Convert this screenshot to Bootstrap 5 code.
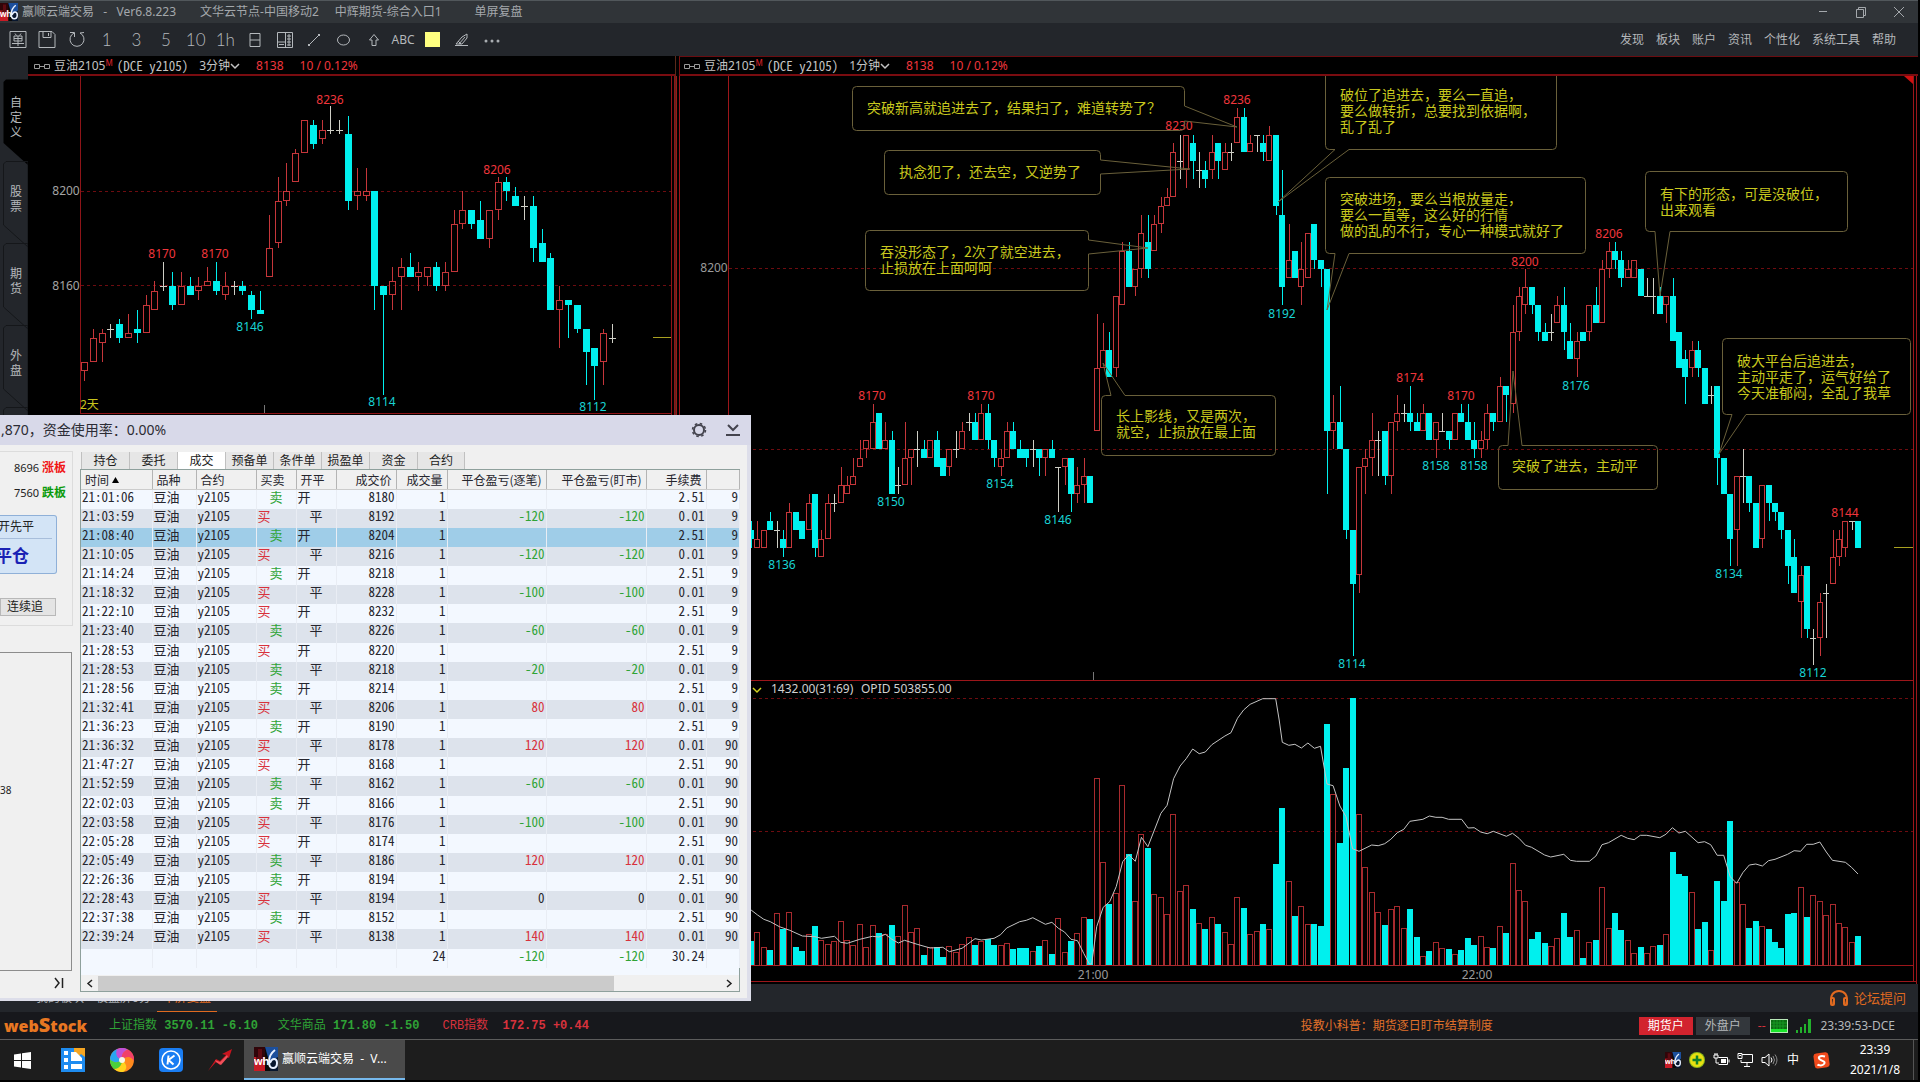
<!DOCTYPE html>
<html lang="zh-CN">
<head>
<meta charset="utf-8">
<meta name="viewport" content="width=device-width, initial-scale=1">
<title>赢顺云端交易</title>
<link href="https://cdn.jsdelivr.net/npm/bootstrap@5.3.0/dist/css/bootstrap.min.css" rel="stylesheet">
<style>
:root{--ui:"Noto Sans","Noto Sans CJK SC",sans-serif;--mono:"Noto Sans Mono CJK SC","Liberation Mono","Noto Sans CJK SC",monospace}
html,body{height:100%}
body{background:#000;font-family:var(--ui);font-size:12px;line-height:16px;color:#b4b7ba;padding:0 2px 2px 0;overflow:hidden}
button{font:inherit;color:inherit;background:none;border:0;padding:0}
svg{display:block}
.ico{fill:none;stroke:currentColor;stroke-width:1}
.titlebar{height:23px;background:#303438;border-top:1px solid #51575b;color:#a4a8ac;padding:0 12px 0 0}
.toolbar-row{height:33px;background:#23262b;padding:0 22px 0 3px}
.tools{width:504px;color:#b4b8bc}
.tools button{flex:1;display:flex;align-items:center;justify-content:center;height:20px;font-size:17px;font-weight:300;font-family:Lato,sans-serif}
.tools .abc{font:12px "Noto Sans",sans-serif}
.swatch{width:15px;height:15px;background:#ffff80}
.topmenu{gap:12px;padding-top:1px}
.topmenu a,.bottomtabs a{color:inherit;text-decoration:none}
.side{width:28px;background:#23262b;padding-top:23px;color:#b5b8bb}
.side button{height:82px;width:28px;position:relative;padding:0 0 6px 5px;line-height:15px}
.side svg{position:absolute;left:0;top:0;z-index:0}
.side span{position:relative;display:block;width:22px;text-align:center}
.chart-left{flex:0 0 648px;border-right:1px solid #5a2a1a}
.chart-head{height:20px;border-bottom:2px solid #7a0c10;color:#c3c3c3;padding:2px 0 0 6px;white-space:nowrap}
.chart-right .chart-head{border-top:1px solid #6a0c10;margin-left:3px;border-left:1px solid #7a1010;padding:1px 0 0 4px}
.chart-head .code{font-family:var(--mono);font-size:13px}
.chart-head button{margin-left:11px}
.chart-head sup{color:#e0262c;font-size:8px;top:-4px}
.red{color:#f0363c}
.plot text{font-family:var(--ui);font-size:12px}
.plot .note{font-size:14px;fill:#c8c81e;font-family:"Noto Sans CJK SC",sans-serif}
.plot .bub{fill:none;stroke:#6a603a;stroke-width:1}
.crisp{shape-rendering:crispEdges}
.bottomtabs{height:28px;background:#23262b;color:#a4a8ac;padding:0 12px 0 30px}
.bottomtabs .nav-link2{padding:6px 6px;height:28px;line-height:16px}
.bottomtabs .on{color:#e06a20;border-bottom:1px solid #e06a20}
.statusbar{height:28px;background:#17181c;border-bottom:1px solid #5c5c5c;padding:0 23px 0 4px}
.idx{font-family:"Liberation Mono","Noto Sans CJK SC",monospace;font-weight:700;font-size:12px;white-space:pre}
.idx b{font-weight:400}
.g{color:#2fa336}.r{color:#d8323c}
.webstock{color:#e87722;font:800 16px/20px "Open Sans",sans-serif;width:105px}
.webstock i{font-size:20px}
.acct{width:54px;height:18px;text-align:center;line-height:18px}
.taskbar{height:40px;background:#1d1d1d;color:#fff}
.task-item{width:49px;height:40px;display:flex;align-items:center;justify-content:center}
.task-on{width:161px;height:40px;background:#4a4a4a;border-bottom:2px solid #76b9ed;padding:0 10px!important}
.tray button{width:24px;display:flex;justify-content:center}
.clock{width:76px;line-height:20px;text-align:center}

.trade{position:absolute;left:0;top:415px;width:751px;height:586px;background:#f0f0f0;border-right:4px solid #dddeea;border-bottom:3px solid #dddeea;color:#222;z-index:5}
.trade-head{height:30px;background:#d8d9e9;font-size:14px;margin-right:-4px;padding:0 11px 0 1px;color:#2c2c34}
.leftcol{width:73px;padding-top:6px}
.grp{height:175px;border:1px solid #dcdcdc;border-left:0;overflow:hidden;position:relative}
.limit{height:25px;padding-right:6px;font-size:11px;padding-top:7px}
.limit b{font-family:"Noto Sans CJK SC",sans-serif;font-size:12px}
.close-btn{width:57px;height:59px;border:1px solid #8fb0d8;border-left:0;background:#d3e4f6;border-radius:0 3px 3px 0;margin-top:13px;position:relative;overflow:hidden;display:block}
.close-btn small,.close-btn strong{display:block;direction:rtl;white-space:nowrap}
.close-btn small{font-size:12px;line-height:22px;border-bottom:1px solid #a8bedb;margin-right:4px;padding-right:18px}
.close-btn strong{font-size:17px;line-height:34px;color:#1a22b4;padding-right:27px}
.chase{width:56px;height:18px;border:1px solid #b8b8b8;background:#e4e4e4;display:block;margin-top:24px;padding-left:6px;text-align:left}
.infobox{flex:1;width:72px;border:1px solid #8c8c8c;border-left:0;margin-top:26px;font-size:10px;padding-top:129px}
.maincol{padding:7px 7px 6px;min-width:0}
.tabs{height:17px;padding-left:1px}
.tabs button{width:48px;height:17px;border-left:1px solid #c0c0c0;background:#e6e6e6;line-height:17px}
.tabs .on{background:#fff}
.listbox{border:1px solid #8ea09c;background:#f3f8ff}
.deals{width:659px;height:498px;table-layout:fixed;border-collapse:collapse;font-family:var(--mono);font-size:13px;line-height:13px;color:#26262e}
.deals th{font-family:"Noto Sans CJK SC",sans-serif;font-weight:400;font-size:12px;background:#f0f0f0;border-right:1px solid #b4b4b4;border-bottom:1px solid #ccc;height:19px;padding:1px 4px 0}
.deals td{padding:0 1px 6px;border-right:1px solid #e9edf4;white-space:nowrap}
.deals tbody tr:nth-child(even) td{background:#dde3ec}
.deals tbody tr.sel td{background:#9fcde8}
.deals .num{text-align:right}
.deals td.sh{padding-left:13px}
.hbar{height:16px;background:#f0f0f0;margin-top:auto}
.hbar i{width:516px;height:15px;background:#cbcbcb}
</style>
<script src="https://cdn.jsdelivr.net/npm/bootstrap@5.3.0/dist/js/bootstrap.bundle.min.js"></script>
</head>
<body class="d-flex flex-column position-relative">

<svg width="0" height="0" class="position-absolute" aria-hidden="true">
  <symbol id="wh6" viewBox="0 0 24 24">
    <rect width="24" height="24" fill="#090909"/><rect width="11" height="12" fill="#300509"/><rect y="10" width="11" height="14" fill="#c81c26"/><path d="M2 10h7v3h-7zM4 2h4v8H4z" fill="#5e0b12"/>
    <path d="M11 0h13v24h-6z" fill="#1c4f9c"/><path d="M16 14l8-4v14h-8z" fill="#07162e"/>
    <text x="0" y="18" font-family="Liberation Sans" font-weight="700" font-size="11" fill="#fff">wh</text>
    <path d="M21 3c-4 3-6 7-6 12 0 4 1.500 6 4 6s4-2 4-5-1-4-3-4-3 1.500-4 4" fill="none" stroke="#e9f1ff" stroke-width="2"/>
  </symbol>
  <symbol id="link" viewBox="0 0 16 8"><path d="M.5 2.500h5v4h-5zM10.500 2.500h5v4h-5zM5.500 4.500h5" fill="none" stroke="#9a9a9a"/></symbol>
</svg>

<header class="titlebar d-flex align-items-center flex-shrink-0">
  <svg width="18" height="18" class="me-1"><use href="#wh6"/></svg>
  <span style="white-space:pre">赢顺云端交易   -   Ver6.8.223</span>
  <span class="ms-4">文华云节点-中国移动2</span>
  <span class="ms-3">中辉期货-综合入口1</span>
  <span style="margin-left:33px">单屏复盘</span>
  <div class="ms-auto d-flex gap-4">
    <button aria-label="最小化"><svg class="ico" width="14" height="14"><path d="M3 6.500h8"/></svg></button>
    <button aria-label="还原"><svg class="ico" width="14" height="14"><path d="M2.500 4.500h7v8h-7zM4.500 4V2.500h7v8H10"/></svg></button>
    <button aria-label="关闭"><svg class="ico" width="14" height="14"><path d="M2 2l10 10M12 2L2 12"/></svg></button>
  </div>
</header>

<div class="toolbar-row d-flex align-items-center justify-content-between flex-shrink-0">
  <div class="tools d-flex">
    <button aria-label="单"><svg class="ico" width="18" height="17"><path d="M1 .5h16v16H1zM6 2.500l1.500 2M12 2.500l-1.500 2M5 5h8v5H5zM5 7.500h8M9 5v10M3 12.500h12"/></svg></button>
    <button aria-label="保存"><svg class="ico" width="18" height="17"><path d="M1 .5h13l3 3v13H1zM5 .5v6h8v-6M10.500 2v3"/></svg></button>
    <button aria-label="刷新"><svg class="ico" width="18" height="17"><path d="M6 2a7 7 0 1 0 6 0M2 1.500h4.500V6M12 2l4-.5"/></svg></button>
    <button>1</button><button>3</button><button>5</button><button>10</button><button>1h</button>
    <button aria-label="日"><svg class="ico" width="12" height="16"><path d="M1 1.500h10v13H1zM1 8h10"/></svg></button>
    <button aria-label="列表"><svg class="ico" width="16" height="16"><path d="M.5.5h15v15H.5zM8.500.5v15M.5 10h8M10 4h4M10 7h4M10 10h4M10 13h4M12 2v12M2 12.500h5"/></svg></button>
    <button aria-label="画线"><svg class="ico" width="14" height="14"><path d="M2 12L12 2"/><path d="M1 11h2v2H1zM11 1h2v2h-2z" fill="currentColor" stroke="none"/></svg></button>
    <button aria-label="椭圆"><svg class="ico" width="15" height="14"><ellipse cx="7.500" cy="7" rx="6" ry="5"/></svg></button>
    <button aria-label="箭头"><svg class="ico" width="12" height="14"><path d="M6 1.500L1.500 7H4v5.500h4V7h2.500z"/></svg></button>
    <button class="abc">ABC</button>
    <button aria-label="颜色"><span class="swatch"></span></button>
    <button aria-label="橡皮"><svg class="ico" width="16" height="14"><path d="M1 12.500h13M2 11l6-7 5-3v4l-5 6H2zM5 11l6-7M4 8l3 3" /></svg></button>
    <button aria-label="更多"><svg width="16" height="6" fill="#a9adb1"><circle cx="2" cy="4" r="1.500"/><circle cx="8" cy="4" r="1.500"/><circle cx="14" cy="4" r="1.500"/></svg></button>
  </div>
  <nav class="topmenu d-flex"><a href="#">发现</a><a href="#">板块</a><a href="#">账户</a><a href="#">资讯</a><a href="#">个性化</a><a href="#">系统工具</a><a href="#">帮助</a></nav>
</div>

<main class="d-flex flex-fill overflow-hidden" style="min-height:0">
  <nav class="side d-flex flex-column flex-shrink-0 overflow-hidden" id="side"></nav>

  <section class="chart-left d-flex flex-column">
    <div class="chart-head d-flex align-items-center">
      <svg width="16" height="8"><use href="#link"/></svg>
      <span class="ms-1">豆油2105<sup>M</sup></span><span class="code ms-1">(DCE y2105)</span>
      <button>3分钟</button><svg class="ico" width="10" height="8"><path d="M1 2l4 4 4-4" stroke-width="1.500"/></svg>
      <span class="red ms-3">8138</span><span class="red ms-3">10 / 0.12%</span>
    </div>
    <svg class="plot flex-fill w-100" id="p3" viewBox="28 76 647 908" preserveAspectRatio="xMidYMid meet" style="min-height:0"></svg>
  </section>

  <section class="chart-right d-flex flex-column flex-fill" style="min-width:0">
    <div class="chart-head d-flex align-items-center">
      <svg width="16" height="8"><use href="#link"/></svg>
      <span class="ms-1">豆油2105<sup>M</sup></span><span class="code ms-1">(DCE y2105)</span>
      <button>1分钟</button><svg class="ico" width="10" height="8"><path d="M1 2l4 4 4-4" stroke-width="1.500"/></svg>
      <span class="red ms-3">8138</span><span class="red ms-3">10 / 0.12%</span>
    </div>
    <svg class="plot flex-fill w-100" id="p1" viewBox="676 76 1242 908" preserveAspectRatio="xMidYMid meet" style="min-height:0"></svg>
  </section>
</main>

<nav class="bottomtabs d-flex flex-shrink-0 align-items-center">
  <a href="#" class="nav-link2">我的板块</a><a href="#" class="nav-link2">夜盘屏0分</a><a href="#" class="nav-link2 on">单屏复盘</a><a href="#" class="nav-link2 ms-1">+</a>
  <a href="#" class="ms-auto d-flex align-items-center" style="color:#e06a20;font-size:13px">
    <svg width="21" height="18" class="me-1" fill="none" stroke="#e06a20" stroke-width="2"><path d="M3 15C0 6 5 2 10 2s10 4 7 13"/><rect x="2" y="9" width="3" height="7" rx="1"/><rect x="15" y="9" width="3" height="7" rx="1"/></svg>论坛提问</a>
</nav>

<footer class="statusbar d-flex flex-shrink-0 align-items-center">
  <span class="webstock">web<i class="fst-normal">S</i>tock</span>
  <span class="idx g"><b>上证指数</b> 3570.11 -6.10</span>
  <span class="idx g" style="margin-left:20px"><b>文华商品</b> 171.80 -1.50</span>
  <span class="idx r" style="margin-left:23px"><b>CRB指数</b>  172.75 +0.44</span>
  <a href="#" class="text-decoration-none ms-auto" style="color:#e0702a">投教小科普：期货逐日盯市结算制度</a>
  <div class="d-flex align-items-center" style="margin-left:146px">
    <button class="acct text-white" style="background:#d2232e">期货户</button>
    <button class="acct" style="background:#33373c;margin-left:3px">外盘户</button>
    <span class="r ms-2">--</span>
    <svg width="18" height="16" class="ms-1 me-1"><rect x=".5" y="1.500" width="17" height="13" fill="#0c6b12" stroke="#b8e8b8"/><path d="M1 11h16v3H1z" fill="#1be62c"/><path d="M4 2v9M7 2v9M10 2v9M13 2v9M1 5h16M1 8h16" stroke="#169a22"/></svg>
    <svg width="17" height="16" class="ms-1 me-2" fill="#22b02c"><path d="M0 12h2v3H0zM4 9h2v6H4zM8 6h2v9H8zM12 1h3v14h-3z"/></svg>
    <span>23:39:53-DCE</span>
  </div>
</footer>

<div class="taskbar d-flex flex-shrink-0 align-items-center">
  <button class="task-item" style="width:44px" aria-label="开始"><svg width="17" height="17" fill="#fff"><path d="M0 2.500l7-1V8H0zM8 1.300L17 0v8H8zM0 9h7v6.500l-7-1zM8 9h9v8l-9-1.300z"/></svg></button>
  <button class="task-item ms-1" aria-label="文件"><svg width="24" height="24"><rect width="24" height="24" fill="#1e8cf0"/><path d="M13 0h11v9l-4-3-3 3-4-4z" fill="#f5a623"/><path d="M3 3h4v4H3zM3 10h4v4H3zM3 17h4v4H3zM10 4h5l6 6v3H10zM10 16h11v5H10z" fill="#fff"/></svg></button>
  <button class="task-item" aria-label="浏览器"><svg width="24" height="24"><g transform="translate(12 12)"><circle r="12" fill="#ff8a1e"/><path d="M0 0C-6-2-9-7-5-11A12 12 0 0 1 6-10.400C2-9-1-5 0 0" fill="#c050d8"/><path d="M0 0C-1-6 2-9 6-10.400A12 12 0 0 1 12 1C9-4 4-4 0 0" fill="#f0406a"/><path d="M0 0C5 4 6 9 1 12A12 12 0 0 1-8 9C-3 8 0 5 0 0" fill="#ffd21e"/><path d="M0 0C0 6-4 9-8 9A12 12 0 0 1-12-1C-8 3-4 3 0 0" fill="#4ccf3a"/><path d="M0 0C-4 3-9 3-12-1A12 12 0 0 1-5-11C-7-5-5-2 0 0" fill="#28a6f0"/><circle r="3" fill="#f6f6e8"/></g></svg></button>
  <button class="task-item" aria-label="K"><svg width="24" height="24"><rect width="24" height="24" rx="4" fill="#1a7df2"/><circle cx="12" cy="12" r="9" fill="none" stroke="#fff" stroke-width="1.500"/><path d="M9.500 7.500l-1 9M15.500 7.500L9.500 12l5 4.500" fill="none" stroke="#fff" stroke-width="2"/></svg></button>
  <button class="task-item" aria-label="行情"><svg width="26" height="24"><path d="M1 23l8-12 4 2 6-6-4-1 10-5-3 9-2-1-7 8-4-3z" fill="#c8141e"/><path d="M8 12l5 2 7-7 1 2-7 8-5-3z" fill="#f0505a"/></svg></button>
  <button class="task-on d-flex align-items-center"><svg width="24" height="24" class="me-1"><use href="#wh6"/></svg><span style="white-space:pre">赢顺云端交易  -  V...</span></button>
  <div class="tray d-flex align-items-center ms-auto">
    <button aria-label="wh6"><svg width="16" height="16"><use href="#wh6"/></svg></button>
    <button aria-label="安全"><svg width="16" height="16"><circle cx="8" cy="8" r="8" fill="#8ab81e"/><circle cx="8" cy="8" r="7" fill="#e8e010"/><path d="M8 3.500v9M3.500 8h9" stroke="#11802a" stroke-width="2.500"/></svg></button>
    <button aria-label="电源"><svg class="ico" width="17" height="16"><path d="M5.500 5.500h9v7h-9M16 7.500v3M1 3h4v3H1zM2 1v2M4 1v2M3 6v5h3"/><path d="M8 7h5v4H8z" fill="#fff" stroke="none"/></svg></button>
    <button aria-label="网络"><svg class="ico" width="17" height="16"><path d="M5 2.500h10.500v8H4V8M7 14.500h6M10 10.500v4M1 1.500h4v5H1zM2 3.500h2"/></svg></button>
    <button aria-label="音量"><svg class="ico" width="17" height="16"><path d="M1 5.500h3L8 2v12l-4-3.500H1zM10 5.500q2 2.500 0 5"/><path d="M12 4q3 4 0 8M14 2.500q4 5.500 0 11" stroke="#888"/></svg></button>
    <button>中</button>
    <button style="width:32px" aria-label="输入法"><svg width="17" height="17"><rect x="1" y="1" width="15" height="15" rx="3" fill="#f04a1c" transform="rotate(-8 8 8)"/><path d="M12 4.500C7 3 4 5.500 7 7.500s6 2 4 4.500-6 1-6.500.5" fill="none" stroke="#fff" stroke-width="2"/></svg></button>
  </div>
  <div class="clock">23:39<br>2021/1/8</div>
  <div style="width:5px;height:40px;border-left:1px solid #555"></div>
</div>

<section class="trade d-flex flex-column">
  <div class="trade-head d-flex align-items-center flex-shrink-0">
    <span>,870，资金使用率：0.00%</span>
    <button class="ms-auto" aria-label="设置"><svg width="16" height="16" fill="none" stroke="#44444e"><circle cx="8" cy="8" r="5" stroke-width="2"/><circle cx="8" cy="8" r="6.500" stroke-width="1.500" stroke-dasharray="2.600 2.500"/></svg></button>
    <button style="margin-left:19px" aria-label="收起"><svg width="14" height="12" fill="none" stroke="#44444e" stroke-width="2"><path d="M2 1l5 5 5-5M0 11h14"/></svg></button>
  </div>
  <div class="d-flex flex-fill" style="min-height:0">
    <div class="leftcol d-flex flex-column flex-shrink-0">
      <div class="grp">
        <div class="limit text-end">8696 <b style="color:#f01414">涨板</b></div>
        <div class="limit text-end">7560 <b style="color:#0a9a0a">跌板</b></div>
        <button class="close-btn"><small>开先平</small><strong>平仓</strong></button>
        <button class="chase">连续追</button>
      </div>
      <div class="infobox">38</div>
      <div class="text-end pe-2" style="height:27px;padding-top:6px"><button aria-label="末页"><svg class="ico" width="12" height="12"><path d="M2 1l4 5-4 5M9.500 1v10" stroke-width="1.500"/></svg></button></div>
    </div>
    <div class="maincol d-flex flex-column flex-fill">
      <div class="tabs d-flex flex-shrink-0"><button>持仓</button><button>委托</button><button class="on">成交</button><button>预备单</button><button>条件单</button><button>损盈单</button><button>资金</button><button style="border-right:1px solid #c0c0c0">合约</button></div>
      <div class="listbox d-flex flex-column flex-fill">
        <table class="deals">
          <colgroup><col style="width:71px"><col style="width:44px"><col style="width:60px"><col style="width:40px"><col style="width:40px"><col style="width:60px"><col style="width:51px"><col style="width:99px"><col style="width:100px"><col style="width:60px"><col></colgroup>
          <thead><tr><th>时间 <svg width="7" height="7" class="d-inline-block align-top mt-1"><path d="M0 6l3.500-6L7 6z"/></svg></th><th>品种</th><th>合约</th><th>买卖</th><th>开平</th><th class="num">成交价</th><th class="num">成交量</th><th class="num">平仓盈亏(逐笔)</th><th class="num">平仓盈亏(盯市)</th><th class="num">手续费</th><th></th></tr></thead>
          <tbody id="deals"></tbody>
        </table>
        <div class="hbar d-flex align-items-center flex-shrink-0"><button style="width:17px" aria-label="左"><svg class="ico mx-auto" width="8" height="9"><path d="M6 1L2 4.500 6 8" stroke-width="1.500"/></svg></button><i></i><button class="ms-auto" style="width:20px" aria-label="右"><svg class="ico mx-auto" width="8" height="9"><path d="M2 1l4 3.500L2 8" stroke-width="1.500"/></svg></button></div>
      </div>
    </div>
  </div>
</section>

<script>
// side tabs
document.getElementById('side').innerHTML = ['自定义','股票','期货','外盘',''].map((t,i)=>
  `<button class="flex-shrink-0"><svg width="28" height="90"><path d="M28 .5H6L3.500 3V64L28 86z" fill="${i?'none':'#000'}" stroke="${i?'#15171a':'none'}"/></svg>${[...t].map(c=>`<span>${c}</span>`).join('')}</button>`).join('');

// deals: time, side, open/close, price, profit
const rows = `21:01:06 S O 8180|21:03:59 B C 8192 -120|21:08:40 S O 8204|21:10:05 B C 8216 -120|21:14:24 S O 8218|21:18:32 B C 8228 -100|21:22:10 B O 8232|21:23:40 S C 8226 -60|21:28:53 B O 8220|21:28:53 S C 8218 -20|21:28:56 S O 8214|21:32:41 B C 8206 80|21:36:23 S O 8190|21:36:32 B C 8178 120|21:47:27 B O 8168|21:52:59 S C 8162 -60|22:02:03 S O 8166|22:03:58 B C 8176 -100|22:05:28 B O 8174|22:05:49 S C 8186 120|22:26:36 S O 8194|22:28:43 B C 8194 0|22:37:38 S O 8152|22:39:24 B C 8138 140`.split('|');
const pl = v => v===undefined ? '<td></td>' : `<td class="num ${v<0?'g':v>0?'r':''}">${v}</td>`;
document.getElementById('deals').innerHTML = rows.map((s,i)=>{
  const [t,d,o,p,v] = s.split(' ');
  return `<tr class="${i===2?'sel':''}"><td>${t}</td><td>豆油</td><td>y2105</td><td class="${d==='B'?'r':'g sh'}">${d==='B'?'买':'卖'}</td><td class="${o==='O'?'':'sh'}">${o==='O'?'开':'平'}</td><td class="num">${p}</td><td class="num">1</td>${pl(v)}${pl(v)}<td class="num">${o==='O'?'2.51':'0.01'}</td><td class="num">${i<13?'9':'90'}</td></tr>`;
}).join('') + `<tr><td></td><td></td><td></td><td></td><td></td><td></td><td class="num">24</td>${pl(-120)}${pl(-120)}<td class="num">30.24</td><td></td></tr>`;

// candles: colour, body top, body bottom, high, low (points above 8100)
const RED='#c5363a', CY='#00f0ee', WH='#cfcfc6';
const parse = s => s.trim().split(/\s+/).map(c=>{const a=c.slice(1).split(',').map(Number);return [c[0],a[0],a[1]??a[0],a[2]??a[0],a[3]??a[1]??a[0]]});
function candles(data,x0,dx,y,w){
  return '<g class="crisp">'+data.map(([t,a,b,h,l],k)=>{
    const x=Math.round(x0+dx*k), Y=p=>Math.round(y(p)), hw=w>>1, col=t==='r'?RED:t==='c'?CY:WH;
    if(t==='w') return `<path d="M${x+.5} ${Y(h)}V${Y(l)}M${x-hw} ${Y(a)+.5}h${w}" stroke="${col}"/>`;
    if(t==='c') return `<path d="M${x+.5} ${Y(h)}V${Y(l)}" stroke="${col}"/><rect x="${x-hw}" y="${Y(a)}" width="${w}" height="${Y(b)-Y(a)}" fill="${col}"/>`;
    return `<path d="M${x+.5} ${Y(h)}V${Y(a)}M${x+.5} ${Y(b)}V${Y(l)}" stroke="${col}"/><rect x="${x-hw+.5}" y="${Y(a)+.5}" width="${w-1}" height="${Y(b)-Y(a)-1}" fill="none" stroke="${col}"/>`;
  }).join('')+'</g>';
}
const labels = (l,c)=>l.map(([t,x,y])=>`<text x="${x}" y="${y+4}" text-anchor="middle" fill="${c}">${t}</text>`).join('');
const dash = (x1,x2,y)=>`<path d="M${x1} ${y}.5H${x2}" stroke="#6e0c10" stroke-dasharray="3 3"/>`;

// 3-minute chart
const d3 = parse(`r28,24,28,20 r38,28,42 r40,36,42,28 w42,42,44,38 c44,38,46,36 r40,38,48 c42,40,50,36 r52,40,56 r58,50,62 w60,60,70,58 c60,52,66,50 r60,52,66 c60,56,64 r60,58,64,54 r62,60,68 c62,58,70,56 r60,56,66,54 w60,60,62,56 c60,58,62,56 c56,50,58,46 c50,48,58 r76,64,90 r96,78,106,76 r100,96,112,94 r116,104,118 r130,116 c128,120,130,118 r126,122,130,120 w126,126,136,124 w126,126,130,124 c124,96,132,92 r100,98,110,92 r100,98,110,96 c100,60,100,50 c60,56,60,14 r62,56,68,50 r68,64,72,50 c68,64,74 r66,64,70,58 r68,64,68,60 c68,60,70,58 r66,60,70,58 r86,66,92 r92,86,100,84 c92,86,92,84 c88,80,96 r92,80,92,76 r104,92,106,88 c104,100,106,96 c98,94,102 w94,94,98,88 c94,76,98,70 c78,70,84 c72,50,74 r54,50,60,34 c54,52,54,38 c52,42,52,40 c42,32,42,18 c34,26,34,12 r40,28,42,18 w38,38,44,36`);
document.getElementById('p3').innerHTML =
  dash(81,671,191)+dash(81,671,285)+
  `<path d="M80.500 76V413.500H671.500M671.500 76V984M674.500 76V984" fill="none" stroke="#8e1418" class="crisp"/><path d="M264.500 405v8" stroke="#777"/><path d="M653 337.500h18" stroke="#a8a020"/>`+
  candles(d3,84,8.8,p=>191.3+(100-p)*2.367,7)+
  labels([['8170',162,254],['8170',215,254],['8236',330,100],['8206',497,170]],'#f0363c')+
  labels([['8146',250,327],['8114',382,402],['8112',593,407]],'#19d3d3')+
  labels([['8200',66,191],['8160',66,286]],'#a4a4a4')+`<text x="80" y="409" fill="#c8c41c">2天</text>`;

// 1-minute chart
const d1 = parse(`c42,40,44,38 r40,38,44 r42,38 c44,42,46 w42,42,44,38 c40,38,42,36 r46,38,48 c46,42 c44,40 r48,42,50 c50,38,50,36 r40,36,42 r48,40,50 w48,48,50,46 r52,48,56 r52,50,54 r54,52,58 r58,56,62 r62,60,62,58 r66,60,70 c68,60 r62,60,66 c62,50,64 w52,52,56,50 r58,52,66 r60,58,60,52 w60,60,64,56 c60,58,62 r62,58 c62,56,64 c58,54 r60,56,60,54 w60,60,64,58 r64,60,66 w66,66,68,64 c66,62,68 r68,62,70 c68,62,70,60 c62,58,62,56 r58,56,60,54 r64,58,66 c64,60,66 c60,58,62 c60,58,60,56 w60,60,62,56 c60,58,60,54 r60,58,60,54 c60,58,62 w56,56,56,46 r58,56,58,52 c58,50,58,46 r52,50,56,48 r54,52,58,48 c54,48 r78,64,90 r82,78,88 c82,76,86 r94,78,94,76 r104,92,106 c104,96,106 r100,96,100,94 r108,100,112,98 c106,100,112,98 r110,104,112 r114,110,116,108 r116,114,118 r126,116,128 w124,124,130,120 r130,122,130,118 c128,124,130,120 w122,122,126,118 c122,120,124,118 r126,122,130,120 c128,124,128,120 r126,122,128 w126,126,128,124 r134,128,136 c134,126,136 r128,126,130 w130,130,130,126 c128,126,130,124 r130,124,132 c130,114,130,112 c112,96,122,92 r102,98,110 c104,98 r100,96,106,92 r108,98 c110,102,110,100 c102,100,102,96 c100,64,100,50 r66,64,72,60 c66,60,74 c60,42,60,40 c42,30,42,14 r56,32,56,28 r58,56,60,50 r62,58,68,54 w62,62,64,54 c64,54,64,52 r66,54,66,50 r68,66,72,64 w68,68,70,66 c68,66,74,64 c66,64,68 r68,64,70 c68,62 r66,62,66,58 w64,64,68,64 c64,62,64,60 r68,62 c68,66,70 c66,62,70 c62,60,66,58 r62,60,64,58 r68,62,70,60 c68,66,68,64 r74,66,76 c74,72,74,66 r86,70,92,68 r94,86,96,84 r96,92,100,90 c96,92,96,90 c92,86,92,84 c86,84,88 w86,86,90,84 r92,88,94 c92,86,96,82 c84,80,88 r84,80,86,76 c86,84 r92,86,92,84 c92,88,96 r100,88,102 r104,100,106,98 c104,102,106,100 c102,98,104,96 r100,98,102 r102,98 c100,94 w94,94,98 w94,94,98,90 c94,90,96 r94,92,94,88 c94,84,98 c86,78 c80,76,82,70 r82,78,84,76 c82,78,84,76 c78,70 w72,72,74,70 c74,58,74,52 c58,50 c50,40,50,34 r54,42,54,34 w54,54,60,48 c54,48,54,46 c48,38 r52,40,52,38 c52,48,52,44 c48,46,48,44 c46,42,46,40 c42,34,42,30 c36,28,40 r32,26,34,18 c34,20,34,18 w18,18,20,12 r26,18,28,14 w28,28,30,18 r36,30,42 r40,36,42,34 r44,38,44,36 w44,44,44,42 c44,38`);
// volume: height in thirds of a pixel, r hollow, c solid
const vol = `72c98r53r44c155r109c158r53c41c92r118c74r62r72r131r74r59r122r53r119r96c92r121c86r179r98r110r30c53r53c23c58r38r62r83r61c72r78c61c59r65r47c51c51c41r58c74r32c142r38r73c95r145r138c560r310r184c215r539r333c192r392r352c214r203r152r454r221r240r167c127r107c145r123c98r62r203r171c93r101r123c107r303c471c252r147c178r124r123c116c723c512r366c591c800c454r293r218r158r121c167r178r110r169c84c26r42c68r50r47c32r44c81c59c86r53r51c116r95c305r226r191r78c99c66c56r80r155c84c104r21c68r75c233r110r155c104c74r35r54c36r56r61c93r339c273c267c218r109c128c45r253c191c432c248r184r111c131c116r107c68c52c152c155c233r143c209r191r149r184r125r113r68r87c`.match(/\d+[rc]/g);
let bars='<g class="crisp">';
vol.forEach((v,k)=>{const x=Math.round(751+6.4*k)-3,h=Math.round(parseInt(v)/3);
  bars+=v.endsWith('c')?`<rect x="${x}" y="${965-h}" width="6" height="${h}" fill="${CY}"/>`:`<rect x="${x+.5}" y="${965.5-h}" width="5" height="${h}" fill="none" stroke="#a82a2e"/>`;});
bars+='</g>';
const oiA=[16,690,33,705,49,718,66,725,90,740,117,751,150,768,183,770,200,775,234,769,250,787,267,790,300,778,333,769,350,771,367,763,384,778,401,789,417,781,450,793,484,804,517,802,534,815,567,805,601,776,618,780,651,775,668,764,684,744,718,725,735,721,752,713,785,733,802,727,819,745,835,756,852,778,869,782,885,820,900,852,906,852,919,740,936,682,953,665,970,620,987,545,1003,524,1020,544,1036,472,1053,500,1087,400,1103,376,1120,296,1137,258,1153,236,1170,207,1187,221,1203,216,1220,194,1254,168,1270,158,1287,115,1303,90,1320,73,1353,56,1387,56,1396,120,1404,187,1421,196,1437,193,1454,204,1471,189,1488,205,1504,199,1521,312,1537,317];
const oiB=[52,378,68,410,85,506,102,514,135,495,152,497,169,491,185,478,202,458,219,448,235,424,269,418,286,408,303,412,319,412,336,418,370,418,387,444,403,443,420,456,437,461,453,454,487,469,503,460,520,475,537,496,553,502,587,525,603,531,637,523,654,541,670,544,704,544,721,528,737,494,754,488,787,466,804,475,821,479,837,466,854,466,888,473,904,463,921,443,938,459,955,454,988,488,1005,485,1021,494,1038,526,1055,526,1072,590,1089,610,1105,578,1122,555,1139,552,1156,558,1172,542,1189,538,1222,523,1239,512,1256,514,1272,493,1289,493,1306,486,1323,516,1339,541,1373,547,1389,562,1406,582];
const pts=(a,x0)=>{let s='';for(let i=0;i<a.length;i+=2)s+=(x0+a[i]/2.6133).toFixed(1)+','+(680+a[i+1]/3).toFixed(1)+' ';return s};

// speech bubbles: x1,y1,x2,y2, pointer side, base start, base end, tip x, tip y, text x, first line y, lines
function bubble(x1,y1,x2,y2,s,b1,b2,tx,ty,nx,ny,lines){
  const r=4;let d=`M${x1+r} ${y1}`;
  if(s==='t') d+=`H${b1}L${tx} ${ty}L${b2} ${y1}`;
  d+=`H${x2-r}Q${x2} ${y1} ${x2} ${y1+r}`;
  if(s==='r') d+=`V${b1}L${tx} ${ty}L${x2} ${b2}`;
  d+=`V${y2-r}Q${x2} ${y2} ${x2-r} ${y2}`;
  if(s==='b') d+=`H${b2}L${tx} ${ty}L${b1} ${y2}`;
  d+=`H${x1+r}Q${x1} ${y2} ${x1} ${y2-r}V${y1+r}Q${x1} ${y1} ${x1+r} ${y1}`;
  return `<path class="bub" d="${d}"/>`+lines.map((t,i)=>`<text class="note" x="${nx}" y="${ny+5+16*i}">${t}</text>`).join('');
}
document.getElementById('p1').innerHTML =
  dash(729,1913,268)+dash(729,1913,449)+dash(729,1913,698)+dash(729,1913,831)+
  `<path d="M728.500 76V981M679.500 76V981M676.500 76V984M679 680.500H1913M729 965.500H1913M679 981.500H1916M1913.500 76V981M1916.500 76V984" fill="none" stroke="#9c161a" class="crisp"/><path d="M1904 76h9v8z" fill="#d01010"/><path d="M1093.500 672v8" stroke="#777"/><path d="M1894 547.500h19" stroke="#a8a020"/>`+
  candles(d1,751,6.4,p=>269.3+(100-p)*4.493,6)+bars+
  `<polyline points="${pts(oiA,745)+pts(oiB,1320)}" fill="none" stroke="#c4c4c4"/>`+
  labels([['8236',1237,100],['8230',1179,126],['8170',872,396],['8170',981,396],['8200',1525,262],['8206',1609,234],['8174',1410,378],['8170',1461,396],['8144',1845,513]],'#f0363c')+
  labels([['8192',1282,314],['8176',1576,386],['8150',891,502],['8154',1000,484],['8146',1058,520],['8136',782,565],['8158',1436,466],['8158',1474,466],['8114',1352,664],['8134',1729,574],['8112',1813,673]],'#19d3d3')+
  labels([['8200',714,268],['21:00',1093,975],['22:00',1477,975]],'#9a9a9a')+
  `<path d="M753 688l4 4 4-4" fill="none" stroke="#d0d020" stroke-width="1.500"/><text x="771" y="693" fill="#d0d0d0">1432.00(31:69)</text><text x="861" y="693" fill="#d0d0d0">OPID 503855.00</text>`+
  bubble(852.5,86.5,1184.5,130.5,'r',106,121,1237,127,867,108,['突破新高就追进去了，结果扫了，难道转势了？'])+
  bubble(884.5,150.5,1100.5,194.5,'r',160,174,1190,169,899,172,['执念犯了，还去空，又逆势了'])+
  bubble(865.5,230.5,1088.5,290.5,'r',240,254,1148,248,880,252,['吞没形态了，2次了就空进去，','止损放在上面呵呵'])+
  bubble(1101.5,395.5,1275.5,455.5,'t',1111,1125,1103,363,1116,416,['长上影线，又是两次，','就空，止损放在最上面'])+
  bubble(1325.5,70.5,1556.5,149.5,'b',1335,1349,1278,202,1340,95,['破位了追进去，要么一直追，','要么做转折，总要找到依据啊，','乱了乱了'])+
  bubble(1325.5,177.5,1585.5,253.5,'b',1335,1349,1327,310,1340,199,['突破进场，要么当根放量走，','要么一直等，这么好的行情','做的乱的不行，专心一种模式就好了'])+
  bubble(1645.5,171.5,1847.5,231.5,'b',1655,1670,1660,296,1660,194,['有下的形态，可是没破位，','出来观看'])+
  bubble(1722.5,338.5,1910.5,414.5,'b',1732,1746,1719,454,1737,361,['破大平台后追进去，','主动平走了，运气好给了','今天准郁闷，全乱了我草'])+
  bubble(1498.5,445.5,1657.5,489.5,'t',1508,1522,1513,371,1512,466,['突破了进去，主动平']);
</script>
</body>
</html>
